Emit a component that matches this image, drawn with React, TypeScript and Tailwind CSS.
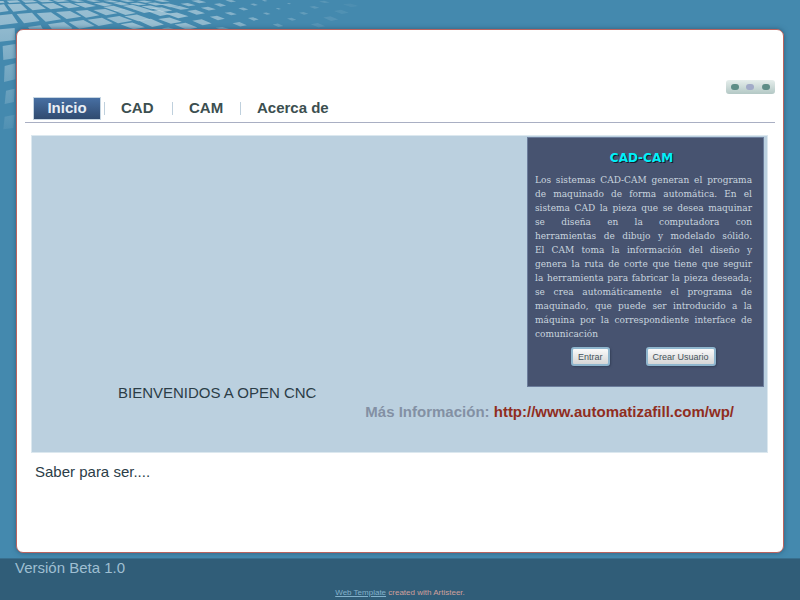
import React from "react";

type Tile = [number, number, number, number, number];

const nearTiles = [
  "0,88 44,84 46,120 0,125",
  "8,138 46,132 48,174 10,180",
  "14,198 46,190 46,238 12,246",
  "18,272 44,266 42,306 14,312",
  "14,350 44,344 40,384 10,388",
  "0,46 36,42 54,69 0,76",
  "50,42 96,38 119,63 72,70",
  "110,40 153,37 184,58 137,65",
  "168,36 210,33 244,50 200,57",
  "226,33 262,30 298,46 258,53",
  "280,30 316,27 352,40 318,46",
  "84,81 122,76 130,90 90,90",
  "144,73 192,66 217,84 210,90 158,90",
  "206,66 250,60 284,78 238,86",
  "262,59 306,53 339,70 296,78",
  "320,54 358,48 397,62 354,70",
  "0,14 12,13 26,33 0,37",
  "22,13 62,11 82,30 40,35",
  "74,12 112,10 138,26 98,31",
  "124,11 160,9 190,23 152,28",
  "174,10 208,8 240,20 206,25",
  "222,10 254,8 288,18 256,23",
  "0,3 10,3 14,8 0,9",
  "20,2 52,1 62,7 28,9",
  "64,1 98,1 112,6 76,8",
  "112,1 144,0 162,5 126,7",
  "158,1 190,0 208,4 174,6",
];

/* centre x, centre y, width, height, opacity */
const farTiles: Tile[] = [
  [232, 3, 40, 5, 0.5], [280, 3, 40, 5, 0.5], [332, 4, 42, 5, 0.5], [382, 3, 42, 5, 0.5], [434, 5, 44, 6, 0.5],
  [310, 13, 54, 10, 0.5], [362, 11, 48, 8, 0.5], [414, 12, 48, 7, 0.5], [486, 3, 44, 6, 0.48], [466, 12, 44, 8, 0.48],
  [342, 25, 60, 14, 0.5], [398, 21, 58, 12, 0.5], [452, 22, 52, 10, 0.5], [508, 16, 52, 10, 0.48],
  [374, 36, 62, 16, 0.5], [430, 31, 60, 14, 0.5], [486, 29, 58, 12, 0.5], [540, 24, 52, 10, 0.46], [564, 14, 42, 9, 0.45], [596, 5, 42, 8, 0.43],
  [412, 54, 72, 18, 0.5], [478, 39, 62, 16, 0.5], [532, 46, 62, 15, 0.5], [588, 37, 50, 13, 0.46], [625, 26, 42, 10, 0.43], [660, 15, 34, 9, 0.38], [692, 3, 30, 7, 0.35],
  [398, 78, 68, 18, 0.5], [454, 69, 70, 22, 0.5], [510, 62, 66, 17, 0.5], [558, 79, 64, 18, 0.48], [606, 67, 54, 16, 0.45], [652, 54, 42, 12, 0.42], [692, 41, 34, 9, 0.38], [730, 27, 28, 8, 0.34], [762, 14, 22, 6, 0.3], [794, 2, 16, 4, 0.28],
  [506, 87, 38, 8, 0.4], [668, 86, 40, 9, 0.35], [719, 73, 40, 12, 0.38], [760, 57, 30, 9, 0.35], [800, 41, 22, 6, 0.3], [835, 26, 15, 4, 0.28], [867, 11, 12, 3, 0.25],
  [834, 76, 30, 9, 0.22], [875, 58, 26, 8, 0.2], [911, 40, 26, 7, 0.18], [943, 22, 28, 7, 0.14], [973, 6, 30, 6, 0.12],
  [954, 76, 40, 12, 0.11], [992, 56, 42, 12, 0.1], [1024, 36, 42, 11, 0.08], [1052, 16, 44, 10, 0.05],
];

function TileBackdrop() {
  return (
    <svg className="absolute top-0 left-0 h-[130px] w-[400px]" viewBox="0 0 1200 390" aria-hidden="true">
      <defs>
        <linearGradient id="fade" x1="0" y1="0" x2="0" y2="390" gradientUnits="userSpaceOnUse">
          <stop offset="0" stopColor="#d8e6ec" stopOpacity="0.6" />
          <stop offset="0.25" stopColor="#d8e6ec" stopOpacity="0.5" />
          <stop offset="1" stopColor="#d8e6ec" stopOpacity="0.08" />
        </linearGradient>
      </defs>
      {nearTiles.map((points) => (
        <polygon key={points} points={points} fill="url(#fade)" />
      ))}
      {farTiles.map(([x, y, w, h, o]) => (
        <polygon
          key={`${x}-${y}`}
          points={`${x - w * 0.54},${y - h * 0.3} ${x - w * 0.02},${y - h * 0.58} ${x + w * 0.54},${y + h * 0.2} ${x + w * 0.04},${y + h * 0.56}`}
          fill="#d8e6ec"
          fillOpacity={o * 1.15}
        />
      ))}
    </svg>
  );
}

const navItems = ["CAD", "CAM", "Acerca de"];

const introLines = [
  "Los sistemas CAD-CAM generan el programa",
  "de maquinado de forma automática. En el",
  "sistema CAD la pieza que se desea maquinar",
  "se diseña en la computadora con",
  "herramientas de dibujo y modelado sólido.",
  "El CAM toma la información del diseño y",
  "genera la ruta de corte que tiene que seguir",
  "la herramienta para fabricar la pieza deseada;",
  "se crea automáticamente el programa de",
  "maquinado, que puede ser introducido a la",
  "máquina por la correspondiente interface de",
];

const buttonClass =
  "h-[19px] rounded-[3px] border-2 border-[#8fb6ce] bg-linear-to-b from-[#fafafa] to-[#d6d6d6] px-[5px] text-[9px] leading-[14px] text-[#45535a] shadow-[1px_1px_2px_#35405a]";

export default function App() {
  return (
    <div className="relative flex min-h-screen flex-col bg-[#4489ae] font-['Liberation_Sans',Arial,sans-serif]">
      <TileBackdrop />
      <div className="relative mx-4 mt-[29px] mb-[5px] flex grow flex-col rounded-[7px] border border-[#b9635f] bg-white px-2 shadow-[0_0_5px_#2d5f7d]">
        <div className="mt-[50px] flex justify-end">
          <div className="flex h-[14px] w-[49px] items-center justify-around rounded-[3px] bg-linear-to-b from-[#e6eeec] to-[#b3c8c5] px-px">
            <span className="h-[6px] w-2 rounded-full bg-[#5e8d87]" />
            <span className="h-[6px] w-2 rounded-full bg-[#a2abc8]" />
            <span className="h-[6px] w-2 rounded-full bg-[#5e8d87]" />
          </div>
        </div>

        <nav className="mt-[3px] flex h-[26px] border-b border-[#a9afc3] pl-2 text-[15px] leading-[22px] font-bold text-[#3c4f50]">
          <a href="#inicio" className="h-[23px] w-[68px] border border-[#c5d5e2] bg-linear-to-b from-[#476fa3] to-[#304b70] text-center leading-[20px] text-[#e8eef5]">
            Inicio
          </a>
          {navItems.map((item) => (
            <React.Fragment key={item}>
              <span className="mt-[5px] ml-[3px] h-[13px] w-px bg-[#bfd0dd]" />
              <a href={`#${item}`} className="h-[22px] pl-4 [&:not(:last-child)]:w-16">
                {item}
              </a>
            </React.Fragment>
          ))}
        </nav>

        <main className="mr-[7px] ml-[6px] mt-3">
          <section className="flex min-h-[318px] flex-col border border-[#dce8ef] bg-[#bbd0df]">
            <div className="flex items-end">
              <h1 className="-mb-[15px] grow pl-[86px] text-[15px] leading-[18px] text-[#2b3d47]">BIENVENIDOS A OPEN CNC</h1>
              <aside className="mt-px mr-[3px] h-[250px] w-[237px] shrink-0 border border-[#6b7c9b] bg-[#475370] px-[7px] pt-[13px]">
                <h2 className="pr-2 text-center font-['DejaVu_Sans',sans-serif] text-[12px] leading-[14px] font-bold text-[#00f0fa] [text-shadow:1px_1px_0_#161d2c]">
                  CAD-CAM
                </h2>
                <p className="mt-2 mr-1 font-['DejaVu_Serif',serif] text-[9px] leading-[14px] text-[#c9d5df]">
                  {introLines.map((line) => (
                    <span key={line} className="block [text-align-last:justify]">
                      {line}
                    </span>
                  ))}
                  <span className="block">comunicación</span>
                </p>
                <div className="mt-[6px] flex gap-9 pl-9">
                  <button className={buttonClass}>Entrar</button>
                  <button className={buttonClass}>Crear Usuario</button>
                </div>
              </aside>
            </div>
            <p className="mt-4 pr-[33px] text-right text-[15px] leading-[18px] font-bold text-[#8390a4]">
              Más Información:{" "}
              <a href="http://www.automatizafill.com/wp/" className="text-[#902d1e]">
                http://www.automatizafill.com/wp/
              </a>
            </p>
          </section>
          <p className="mt-[10px] pl-1 text-[15px] leading-[18px] text-[#2b3d47]">Saber para ser....</p>
        </main>
      </div>

      <footer className="relative h-[42px] border-t border-[#396f8e] bg-[#305d78]">
        <p className="pl-[15px] text-[15px] leading-[18px] text-[#9fbfd2]">Versión Beta 1.0</p>
        <p className="mt-[11px] text-center text-[8px] leading-[10px] text-[#d0a09c]">
          <a href="#template" className="text-[#83b2cc] underline">
            Web Template
          </a>{" "}
          created with Artisteer.
        </p>
      </footer>
    </div>
  );
}
